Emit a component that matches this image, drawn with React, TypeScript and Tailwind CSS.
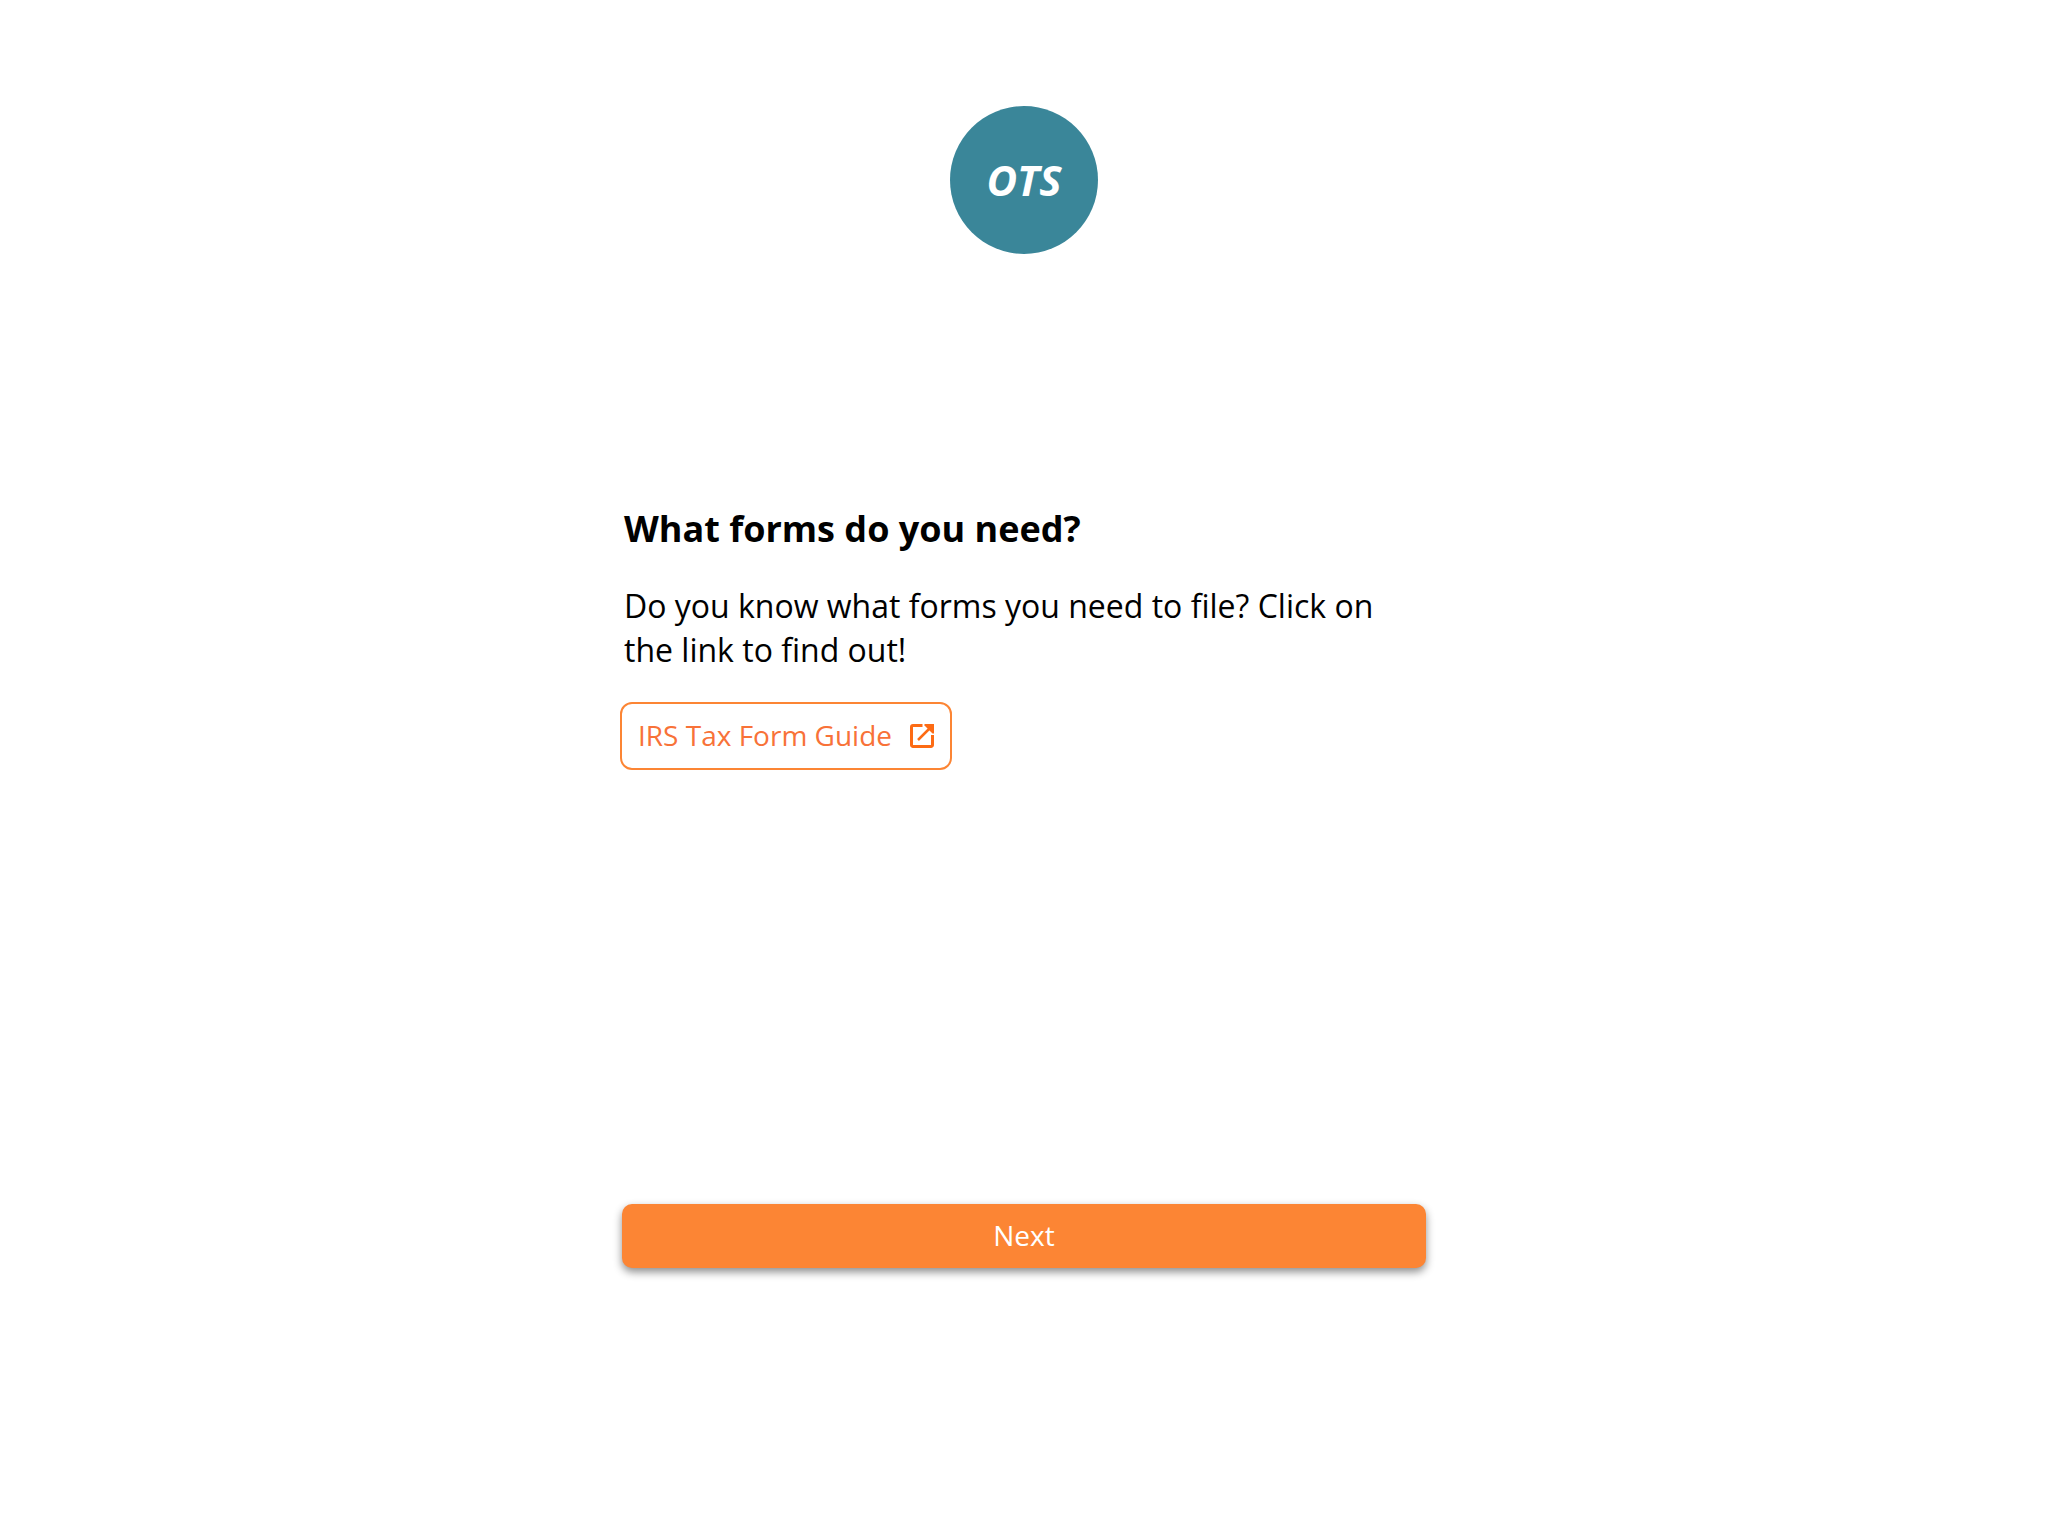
export default function App() {
  return (
    <main className="flex min-h-screen flex-col items-center bg-white px-6 pt-[106px] font-['Open_Sans',sans-serif] text-black">
      <div className="flex size-[148px] items-center justify-center rounded-full bg-[#3a8699] pb-0.5 text-[42px] font-bold italic text-white">
        OTS
      </div>
      <section className="mt-[250px] flex w-full max-w-[804px] flex-col items-start">
        <h1 className="px-0.5 text-[36px] leading-[50px] font-bold">What forms do you need?</h1>
        <p className="mt-[30px] px-0.5 text-[32px] leading-[44px]">
          Do you know what forms you need to file? Click on the link to find out!
        </p>
        <a
          href="#guide"
          className="mt-[30px] -ml-0.5 flex h-[68px] items-center gap-3.5 rounded-xl border-2 border-[#fc8534] pr-3 pl-4 text-[28px] text-[#f87238]"
        >
          <span className="pb-0.5">IRS Tax Form Guide</span>
          <svg viewBox="0 0 32 32" className="size-8 text-[#fd6b14]" fill="none" stroke="currentColor" strokeWidth="3" aria-hidden="true">
            <path d="M16.5 5.5H7A1.5 1.5 0 0 0 5.5 7v18A1.5 1.5 0 0 0 7 26.5h18a1.5 1.5 0 0 0 1.5-1.5V15" />
            <path d="M12 20 26 6" strokeWidth="2.5" />
            <path d="M18.5 4H28v9.5h-1.5L18.5 5.5z" fill="currentColor" stroke="none" />
          </svg>
        </a>
        <button
          type="button"
          className="mt-[434px] h-16 w-full rounded-[10px] bg-[#fc8534] pb-0.5 text-[28px] text-white shadow-[0_4px_8px_rgba(0,0,0,0.45)]"
        >
          Next
        </button>
      </section>
    </main>
  );
}
